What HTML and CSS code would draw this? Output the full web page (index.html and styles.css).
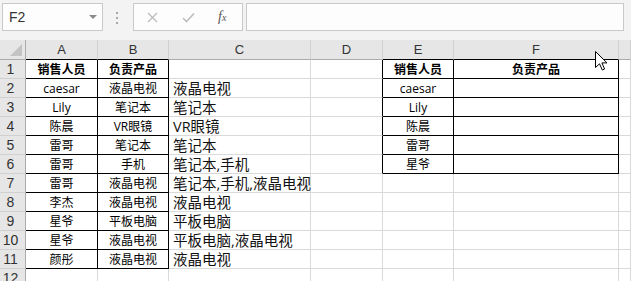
FILE: index.html
```html
<!DOCTYPE html>
<html lang="zh">
<head>
  <meta charset="UTF-8">
  <title>销售人员 负责产品</title>
  <link rel="stylesheet" href="styles.css">
</head>
<body>
  <div class="formula-bar">
    <div class="name-box">
      <span>F2</span>
      <svg class="drop" width="8" height="4" viewBox="0 0 8 4"><polygon points="0,0 8,0 4,4" fill="#8a8a8a"/></svg>
    </div>
    <svg class="grip" width="3" height="12" viewBox="0 0 3 12">
      <rect x="0" y="0" width="2" height="2" fill="#a8a8a8"/>
      <rect x="0" y="5" width="2" height="2" fill="#a8a8a8"/>
      <rect x="0" y="10" width="2" height="2" fill="#a8a8a8"/>
    </svg>
    <div class="fx-box">
      <svg class="btn" width="11" height="11" viewBox="0 0 11 11"><path d="M1 1 L10 10 M10 1 L1 10" stroke="#bdbdbd" stroke-width="1.4" fill="none"/></svg>
      <svg class="btn" width="13" height="11" viewBox="0 0 13 11"><path d="M1 6 L4.5 9.5 L12 1.5" stroke="#bdbdbd" stroke-width="1.6" fill="none"/></svg>
      <span class="fx">f<sub>x</sub></span>
    </div>
    <div class="input-box"></div>
  </div>

  <div class="sheet">
    <div class="hd corner"><svg width="12" height="12" viewBox="0 0 12 12"><polygon points="12,0 12,12 0,12" fill="#c3c3c3"/></svg></div>
    <div class="hd col dark">A</div>
    <div class="hd col dark">B</div>
    <div class="hd col">C</div>
    <div class="hd col">D</div>
    <div class="hd col dark">E</div>
    <div class="hd col dark">F</div>
    <div class="hd col"></div>

    <div class="hd row">1</div>
    <div class="cell box bold">销售人员</div>
    <div class="cell box bold">负责产品</div>
    <div class="cell wide"></div>
    <div class="cell edge"></div>
    <div class="cell box bold">销售人员</div>
    <div class="cell box bold">负责产品</div>
    <div class="cell"></div>

    <div class="hd row">2</div>
    <div class="cell box">caesar</div>
    <div class="cell box">液晶电视</div>
    <div class="cell wide">液晶电视</div>
    <div class="cell edge"></div>
    <div class="cell box">caesar</div>
    <div class="cell box"></div>
    <div class="cell"></div>

    <div class="hd row">3</div>
    <div class="cell box">Lily</div>
    <div class="cell box">笔记本</div>
    <div class="cell wide">笔记本</div>
    <div class="cell edge"></div>
    <div class="cell box">Lily</div>
    <div class="cell box"></div>
    <div class="cell"></div>

    <div class="hd row">4</div>
    <div class="cell box">陈晨</div>
    <div class="cell box">VR眼镜</div>
    <div class="cell wide">VR眼镜</div>
    <div class="cell edge"></div>
    <div class="cell box">陈晨</div>
    <div class="cell box"></div>
    <div class="cell"></div>

    <div class="hd row">5</div>
    <div class="cell box">雷哥</div>
    <div class="cell box">笔记本</div>
    <div class="cell wide">笔记本</div>
    <div class="cell edge"></div>
    <div class="cell box">雷哥</div>
    <div class="cell box"></div>
    <div class="cell"></div>

    <div class="hd row">6</div>
    <div class="cell box">雷哥</div>
    <div class="cell box">手机</div>
    <div class="cell wide">笔记本,手机</div>
    <div class="cell edge"></div>
    <div class="cell box">星爷</div>
    <div class="cell box"></div>
    <div class="cell"></div>

    <div class="hd row">7</div>
    <div class="cell box">雷哥</div>
    <div class="cell box">液晶电视</div>
    <div class="cell wide">笔记本,手机,液晶电视</div>
    <div class="cell"></div>
    <div class="cell"></div>
    <div class="cell"></div>
    <div class="cell"></div>

    <div class="hd row">8</div>
    <div class="cell box">李杰</div>
    <div class="cell box">液晶电视</div>
    <div class="cell wide">液晶电视</div>
    <div class="cell"></div>
    <div class="cell"></div>
    <div class="cell"></div>
    <div class="cell"></div>

    <div class="hd row">9</div>
    <div class="cell box">星爷</div>
    <div class="cell box">平板电脑</div>
    <div class="cell wide">平板电脑</div>
    <div class="cell"></div>
    <div class="cell"></div>
    <div class="cell"></div>
    <div class="cell"></div>

    <div class="hd row">10</div>
    <div class="cell box">星爷</div>
    <div class="cell box">液晶电视</div>
    <div class="cell wide">平板电脑,液晶电视</div>
    <div class="cell"></div>
    <div class="cell"></div>
    <div class="cell"></div>
    <div class="cell"></div>

    <div class="hd row">11</div>
    <div class="cell box">颜彤</div>
    <div class="cell box">液晶电视</div>
    <div class="cell wide">液晶电视</div>
    <div class="cell"></div>
    <div class="cell"></div>
    <div class="cell"></div>
    <div class="cell"></div>

    <div class="hd row">12</div>
    <div class="cell"></div>
    <div class="cell"></div>
    <div class="cell"></div>
    <div class="cell"></div>
    <div class="cell"></div>
    <div class="cell"></div>
    <div class="cell"></div>
  </div>

  <svg class="cursor" width="13" height="20" viewBox="0 0 13 20">
    <path d="M0.5 0.5 L0.5 16.5 L4.5 12.8 L7.3 19 L9.6 18 L6.9 11.9 L12 11.9 Z" fill="#fff" stroke="#000" stroke-width="1"/>
  </svg>
</body>
</html>
```

FILE: styles.css
```css
body { margin: 0; background: #fff; font-family: "Open Sans", "Noto Sans CJK SC", sans-serif; overflow: hidden; }

.formula-bar { height: 40px; background: #f3f3f3; display: flex; align-items: flex-start; padding-top: 3px; box-sizing: border-box; }
.name-box { margin-left: 2px; width: 101px; height: 28px; box-sizing: border-box; background: #fdfdfd; border: 1px solid #c9c9c9; display: flex; align-items: center; justify-content: space-between; padding: 0 5px 0 6px; }
.name-box span { font-family: "Liberation Sans", sans-serif; font-size: 14px; color: #333; }
.grip { margin: 9px 0 0 13px; }
.fx-box { margin-left: 14px; width: 110px; height: 28px; box-sizing: border-box; background: #fdfdfd; border: 1px solid #c9c9c9; display: flex; align-items: center; padding-left: 13px; gap: 24px; }
.fx { font-family: "Liberation Serif", serif; font-style: italic; font-size: 14px; color: #555; margin-left: -1px; }
.fx sub { font-size: 10px; vertical-align: 0; }
.input-box { margin-left: 3px; width: 378px; height: 28px; box-sizing: border-box; background: #fdfdfd; border: 1px solid #c9c9c9; }

.sheet { display: grid; grid-template-columns: 26px 72px 71px 142px 72px 71px 165px 1fr; grid-template-rows: 20px; grid-auto-rows: 19px; }

.hd { background: #e6e6e6; color: #333; font-family: "Liberation Sans", sans-serif; font-size: 13px; box-sizing: border-box; border-right: 1px solid #c5c5c5; border-bottom: 1px solid #c5c5c5; }
.corner { display: flex; align-items: flex-end; justify-content: flex-end; padding: 0 3px 3px 0; border-bottom-color: #ababab; border-right-color: #ababab; }
.col { text-align: center; line-height: 20px; border-bottom-color: #ababab; border-right-color: #d0d0d0; }
.col.dark { border-bottom-color: #000; }
.row { text-align: center; padding-right: 4px; font-size: 14px; line-height: 19px; border-right-color: #ababab; border-bottom-color: #d0d0d0; }

.cell { box-sizing: border-box; border-right: 1px solid #d9d9d9; border-bottom: 1px solid #d9d9d9; font-size: 12px; color: #000; line-height: 19px; white-space: nowrap; }
.box { border-color: #000; text-align: center; }
.bold { font-weight: bold; }
.wide { font-size: 14.5px; line-height: 20px; padding-left: 4px; overflow: visible; color: #111; }
.edge { border-right-color: #000; }

.cursor { position: absolute; left: 595px; top: 51px; }
```
